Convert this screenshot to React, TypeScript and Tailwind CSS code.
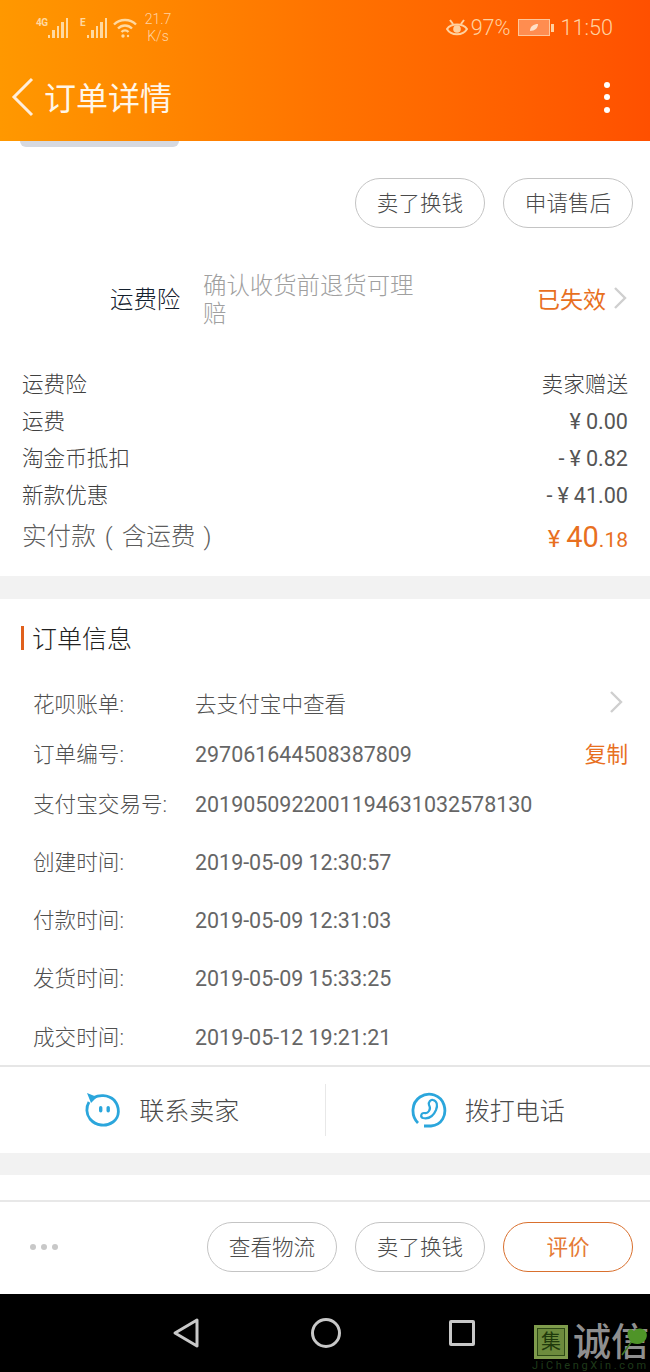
import React from "react";

const font = { fontFamily: 'Roboto, "Noto Sans CJK SC", sans-serif' };

function Signal({ label, w }: { label: string; w: string }) {
  return (
    <div className={`flex items-end h-[20px] relative ${w}`}>
      <span className="absolute left-0 top-0 text-[10px] leading-[10px] font-bold tracking-tighter text-[#ffd9a0]">{label}</span>
      <div className="ml-auto flex items-end gap-[2px]">
        {[3, 8, 12, 16, 20].map((h) => (
          <div key={h} className="w-[2.5px] bg-[#ffd9a0]" style={{ height: h }} />
        ))}
      </div>
    </div>
  );
}

function Pill({ children, active }: { children: React.ReactNode; active?: boolean }) {
  return (
    <div
      className={`w-[130px] h-[50px] pt-[2px] rounded-full flex items-center justify-center text-[21.6px] font-light border ${
        active ? "border-[#d9702e] text-[#e57a35] font-normal" : "border-[#c4c4c4] text-[#4a4a4a]"
      }`}
    >
      {children}
    </div>
  );
}

function Chevron({ className }: { className?: string }) {
  return (
    <svg width="14" height="22" viewBox="0 0 14 22" fill="none" stroke="#cfcfcf" strokeWidth="2.4" className={className}>
      <path d="M2 1l10 10L2 21" />
    </svg>
  );
}

function Yen({ children, neg }: { children: React.ReactNode; neg?: boolean }) {
  return (
    <span className="flex items-center font-normal text-[#555555]">
      {neg && <span className="mr-[5px]">-</span>}
      <span className="mr-[5px]">¥</span>
      {children}
    </span>
  );
}

function Fee({ k, children }: { k: string; children: React.ReactNode }) {
  return (
    <div className="flex justify-between items-center h-[37px] pt-[4px] text-[21.6px] font-light text-[#404040]">
      <span>{k}</span>
      {children}
    </div>
  );
}

function Info({ k, v, h, digits, right }: { k: string; v: string; h: string; digits?: boolean; right?: React.ReactNode }) {
  return (
    <div className={`flex items-center pt-[4px] text-[21.6px] font-light text-[#505050] ${h}`}>
      <span className="w-[162px] shrink-0 whitespace-nowrap">{k}</span>
      <span className={`flex-1 whitespace-nowrap ${digits ? "text-[21.45px] font-normal text-[#666666]" : ""}`}>{v}</span>
      {right}
    </div>
  );
}

export default function App() {
  return (
    <div className="w-[650px] h-[1372px] bg-white flex flex-col overflow-hidden" style={font}>
      <header className="h-[141px] shrink-0 bg-gradient-to-r from-[#ff9800] via-[#ff7300] to-[#ff5000] flex flex-col">
        <div className="h-[56px] pl-[36px] pr-[37px] pb-[1px] flex items-center text-[#ffd2a0]">
          <Signal label="4G" w="w-[32px]" />
          <Signal label="E" w="w-[27px] ml-[12px]" />
          <svg width="24" height="20" viewBox="0 0 24 20" fill="none" stroke="#ffd9a0" strokeWidth="2.4" className="ml-[6px]">
            <path d="M1 6.5c6-6 16-6 22 0M5 10.5c4-4 10-4 14 0M8.5 14c2-2 5-2 7 0" />
            <circle cx="10" cy="18" r="1.7" fill="#ffd9a0" stroke="none" />
            <circle cx="15" cy="18" r="1.2" fill="#ffd9a0" stroke="none" />
          </svg>
          <div className="ml-[7px] w-[28px] text-center text-[14px] font-light leading-[17px] whitespace-nowrap">
            21.7
            <br />
            K/s
          </div>
          <div className="ml-auto flex items-center text-[21.6px] font-light pt-[1px]">
            <svg width="22" height="20" viewBox="0 0 22 20" fill="none" stroke="#ffd2a0" strokeWidth="2">
              <path d="M1 11c4-6 16-6 20 0c-4 7-16 7-20 0z" />
              <circle cx="11" cy="11" r="3.8" fill="#ffd2a0" stroke="none" />
              <path d="M4 2l3 4M18 2l-3 4" />
            </svg>
            <span className="ml-[3px]">97%</span>
            <div className="ml-[7px] w-[32px] h-[17px] border border-[#ffc79a] flex items-center justify-center bg-[#ff8d50]">
              <svg width="10" height="9" viewBox="0 0 10 9">
                <path d="M1 8C1 3 5 1 9 1c0 4-3 7-8 7z" fill="#ffe0c8" />
              </svg>
            </div>
            <div className="ml-[1px] w-[3px] h-[8px] bg-[#ffd2a0]" />
            <span className="ml-[7px]">11:50</span>
          </div>
        </div>
        <div className="h-[85px] flex items-center pb-[3px]">
          <svg width="24" height="40" viewBox="0 0 24 40" fill="none" stroke="#ffeeda" strokeWidth="3" className="ml-[11px]">
            <path d="M21 2L3 20l18 18" />
          </svg>
          <span className="ml-[9px] pt-[4px] text-[32px] leading-none text-[#fff6e8]">订单详情</span>
          <div className="ml-auto mr-[40px] flex flex-col gap-[6.5px]">
            <div className="w-[6px] h-[6px] rounded-full bg-white" />
            <div className="w-[6px] h-[6px] rounded-full bg-white" />
            <div className="w-[6px] h-[6px] rounded-full bg-white" />
          </div>
        </div>
      </header>

      <main className="flex-1 flex flex-col">
        <div className="ml-[20px] w-[159px] h-[6px] rounded-b-[8px] bg-[#d6d9e0]" />

        <div className="mt-[31px] flex justify-end gap-[18px] pr-[17px]">
          <Pill>卖了换钱</Pill>
          <Pill>申请售后</Pill>
        </div>

        <div className="mt-[41px] h-[60px] flex items-center pl-[110px] pr-[23px]">
          <span className="w-[93px] shrink-0 pt-[4px] text-[23.4px] font-light text-[#14202e]">运费险</span>
          <span className="w-[220px] pt-[2px] text-[23.4px] font-light leading-[28px] text-[#a0a0a0]">确认收货前退货可理赔</span>
          <span className="ml-auto pt-[4px] text-[23px] text-[#e8701f]">已失效</span>
          <Chevron className="ml-[7px] mb-[2px]" />
        </div>

        <div className="mt-[36px] px-[22px]">
          <Fee k="运费险">
            <span>卖家赠送</span>
          </Fee>
          <Fee k="运费">
            <Yen>0.00</Yen>
          </Fee>
          <Fee k="淘金币抵扣">
            <Yen neg>0.82</Yen>
          </Fee>
          <Fee k="新款优惠">
            <Yen neg>41.00</Yen>
          </Fee>
          <div className="flex justify-between items-center h-[46px]">
            <span className="pt-[2px] text-[24.6px] font-light text-[#5c5c5c]">
              实付款<span className="mx-[3px]"> ( </span>含运费<span className="ml-[2px]"> )</span>
            </span>
            <span className="text-[#e8701f] text-[21px] leading-none pt-[2px] flex items-baseline">
              <span className="text-[24px] mr-[6px]">¥</span>
              <span className="text-[29px]">40</span>.18
            </span>
          </div>
        </div>

        <div className="mt-[17px] h-[23px] bg-[#f2f2f2]" />

        <div className="pt-[23px] pl-[21px] pr-[22px]">
          <div className="flex items-center h-[32px]">
            <div className="w-[3px] h-[24px] bg-[#e0601c]" />
            <span className="ml-[8px] pt-[4px] text-[25px] font-light text-[#222222]">订单信息</span>
          </div>
          <div className="mt-[24px] pl-[12px]">
            <Info k="花呗账单:" v="去支付宝中查看" h="h-[50px]" right={<Chevron className="mr-[5px] mb-[7px]" />} />
            <Info
              k="订单编号:"
              v="297061644508387809"
              digits
              h="h-[50px]"
              right={<span className="font-normal text-[#e8701f]">复制</span>}
            />
            <Info k="支付宝交易号:" v="2019050922001194631032578130" digits h="h-[50px]" />
            <div className="mt-[4px]" />
            <Info k="创建时间:" v="2019-05-09 12:30:57" digits h="h-[58px]" />
            <Info k="付款时间:" v="2019-05-09 12:31:03" digits h="h-[58px]" />
            <Info k="发货时间:" v="2019-05-09 15:33:25" digits h="h-[59px]" />
            <Info k="成交时间:" v="2019-05-12 19:21:21" digits h="h-[58px]" />
          </div>
        </div>

        <div className="h-[88px] shrink-0 border-t-2 border-[#e6e6e6] flex items-center">
          <div className="flex-1 flex items-center justify-center gap-[18px]">
            <svg width="36" height="36" viewBox="0 0 36 36" fill="none" stroke="#2ba6dc" strokeWidth="2.8">
              <path d="M9 5.5C13 3 23 2 29 8c6 7 6 17-1 22-7 5-17 4-23-3C1 22 1 15 4 10" />
              <path d="M2 1l10 4-6 6z" fill="#2ba6dc" stroke="none" />
              <rect x="14" y="14" width="3.4" height="6.5" rx="1.7" fill="#2ba6dc" stroke="none" />
              <rect x="21.5" y="14" width="3.4" height="6.5" rx="1.7" fill="#2ba6dc" stroke="none" />
            </svg>
            <span className="pt-[4px] text-[25px] font-light text-[#4a4a4a]">联系卖家</span>
          </div>
          <div className="w-px h-[52px] bg-[#e8e8e8]" />
          <div className="flex-1 flex items-center justify-center gap-[18px]">
            <svg width="36" height="36" viewBox="0 0 36 36" fill="none" stroke="#2ba6dc" strokeWidth="2.8">
              <path d="M7 31C0 24 0 11 9 5c9-6 21-2 24 8 3 10-2 20-13 21h-7" />
              <path d="M22 8c4 1 5 5 3 10c-3 7-8 9-13 8c-3-1-2-5 1-5c2 0 3 1 5-2c2-3 1-4 0-6c-1-3 2-6 4-5z" strokeWidth="2.2" />
            </svg>
            <span className="pt-[4px] text-[25px] font-light text-[#4a4a4a]">拨打电话</span>
          </div>
        </div>

        <div className="h-[22px] shrink-0 bg-[#f2f2f2]" />
        <div className="h-[27px] shrink-0 border-b-2 border-[#e8e8e8]" />

        <div className="flex-1 flex items-center pl-[30px] pr-[17px] pb-[2px]">
          <div className="flex gap-[5px]">
            <div className="w-[6px] h-[6px] rounded-full bg-[#c8c8c8]" />
            <div className="w-[6px] h-[6px] rounded-full bg-[#c8c8c8]" />
            <div className="w-[6px] h-[6px] rounded-full bg-[#c8c8c8]" />
          </div>
          <div className="ml-auto flex gap-[18px]">
            <Pill>查看物流</Pill>
            <Pill>卖了换钱</Pill>
            <Pill active>评价</Pill>
          </div>
        </div>
      </main>

      <footer className="h-[78px] shrink-0 bg-black flex items-center relative">
        <svg width="28" height="32" viewBox="0 0 28 32" fill="none" stroke="#c8c8c8" strokeWidth="3" className="ml-[172px]">
          <path d="M25 3L3 16l22 13z" strokeLinejoin="round" />
        </svg>
        <div className="ml-[111px] w-[30px] h-[30px] rounded-full border-[3px] border-[#c8c8c8]" />
        <div className="ml-[108px] w-[26px] h-[26px] rounded-[2px] border-[3px] border-[#c8c8c8]" />
        <div className="absolute left-[534px] top-[29px] flex items-center gap-[5px]">
          <div className="w-[34px] h-[34px] bg-[#7f9c4c] p-[3px] shrink-0">
            <div className="w-full h-full bg-[#6d8b3d] border border-[#2e4a16] flex items-center justify-center text-[20px] leading-none text-[#1f3a0c]">
              集
            </div>
          </div>
          <span className="text-[38px] leading-none font-medium text-[#8f8f8f] whitespace-nowrap">诚信</span>
        </div>
        <svg width="30" height="34" viewBox="0 0 30 34" className="absolute left-[620px] top-[29px]">
          <path d="M2 32L12 18" stroke="#3f7a22" strokeWidth="1.5" fill="none" />
          <path d="M12 20C4 12 8 2 14 8c6-6 16 0 12 8-3 5-8 6-14 4z" fill="#4f9428" />
        </svg>
        <div className="absolute left-[532px] top-[66px] text-[11px] leading-[11px] tracking-[2.6px] text-[#1f3a1a] whitespace-nowrap">
          JiChengXin.com
        </div>
      </footer>
    </div>
  );
}
